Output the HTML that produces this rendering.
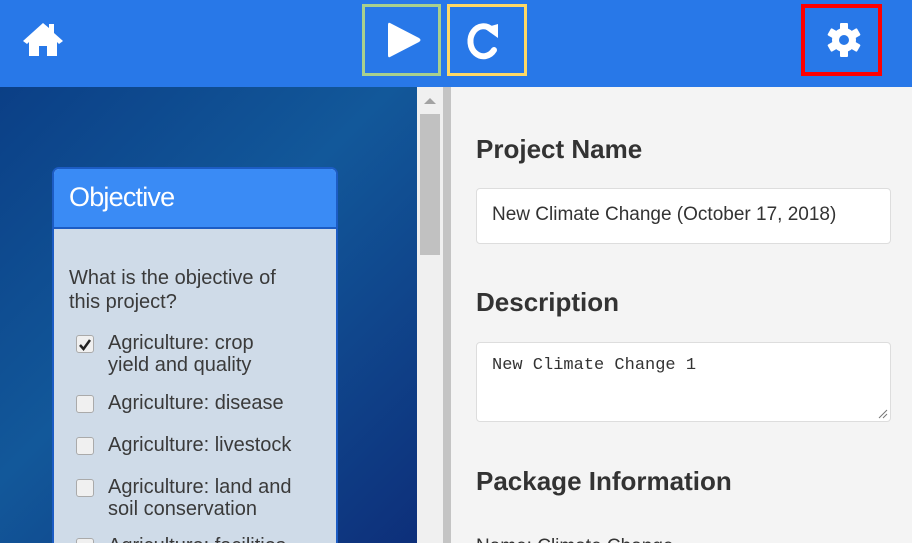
<!DOCTYPE html>
<html><head><meta charset="utf-8"><style>
*{box-sizing:border-box;margin:0;padding:0}
html,body{width:912px;height:543px;overflow:hidden}
body{font-family:"Liberation Sans",Arial,sans-serif;background:#f4f4f4;position:relative}
.hdr{position:absolute;left:0;top:0;width:912px;height:87px;background:#2878e8}
.box{position:absolute;top:4px;height:72px}
.left{position:absolute;left:0;top:87px;width:417px;height:456px;background:linear-gradient(135deg,#0b3f86 0%,#12589a 45%,#0d2f7a 100%)}
.sb{position:absolute;left:417px;top:87px;width:26px;height:456px;background:#f0f0f0}
.thumb{position:absolute;left:3px;top:27px;width:20px;height:141px;background:#c1c1c1}
.arrow{position:absolute;left:7px;top:11px;width:0;height:0;border-left:6px solid transparent;border-right:6px solid transparent;border-bottom:6px solid #a3a3a3}
.div{position:absolute;left:443px;top:87px;width:8px;height:456px;background:#c4c4c4}
.card{position:absolute;left:52px;top:167px;width:286px;height:390px;background:#cfdbe8;border:2px solid #1c5cc4;border-radius:7px;overflow:hidden}
.ch{height:60px;background:#3a8bf5;border-bottom:2px solid #1c5cc4;color:#fff;font-size:27px;padding:13px 0 0 15px;letter-spacing:-0.8px}
.q{position:absolute;left:15px;top:97px;font-size:20px;color:#3a3a3a;line-height:24px;width:235px}
.it{position:absolute;left:22px;font-size:20px;color:#3a3a3a;line-height:22px}
.it span{position:absolute;left:32px;top:0;width:200px}
.it span.n{width:180px}
.cb{position:absolute;left:0;top:3px;width:18px;height:18px;background:#f0f0f0;border:1px solid #aaa;border-radius:3px}
h2{position:absolute;left:476px;font-size:26px;font-weight:bold;color:#333}
.inp{position:absolute;left:476px;width:415px;background:#fff;border:1px solid #ddd;border-radius:4px}
</style></head><body>
<div class="hdr">
<svg style="position:absolute;left:20px;top:20px" width="46" height="38" viewBox="0 0 46 38"><path d="M23 3 L3 21 L7 24 L9 22 L9 36 L19 36 L19 26 L27 26 L27 36 L37 36 L37 22 L39 24 L43 21 L34 13 L34 4 L29 4 L29 8 Z" fill="#fff"/></svg>
<div class="box" style="left:362px;width:79px;border:3px solid #a8d08d"></div>
<svg style="position:absolute;left:387px;top:21px" width="36" height="38" viewBox="0 0 36 38"><path d="M3 2 Q1 1 1 4 L1 34 Q1 37 3 36 L32 21 Q35 19 32 17 Z" fill="#fff"/></svg>
<div class="box" style="left:447px;width:80px;border:3px solid #ffd966"></div>
<svg style="position:absolute;left:462px;top:20px" width="42" height="42" viewBox="0 0 42 42"><path d="M30 10 A13 15 0 1 0 32 30" fill="none" stroke="#fff" stroke-width="6" stroke-linecap="round"/><path d="M22 8 L36 4 L36 18 Z" fill="#fff"/></svg>
<div class="box" style="left:801px;width:81px;border:4px solid #ff0000"></div>
<svg style="position:absolute;left:824px;top:20px" width="40" height="40" viewBox="0 0 40 40"><g fill="#fff" transform="translate(20 20)"><circle r="12"/><g id="t"><rect x="-4" y="-17" width="8" height="8" rx="1"/></g><use href="#t" transform="rotate(60)"/><use href="#t" transform="rotate(120)"/><use href="#t" transform="rotate(180)"/><use href="#t" transform="rotate(240)"/><use href="#t" transform="rotate(300)"/></g><circle cx="20" cy="20" r="5" fill="#2878e8"/></svg>
</div>
<div class="left"></div>
<div class="card">
<div class="ch">Objective</div>
<div class="q">What is the objective of this project?</div>
<div class="it" style="top:163px"><div class="cb"><svg width="16" height="16" viewBox="0 0 16 16"><path d="M3 8 L6.5 12 L13 3" fill="none" stroke="#222" stroke-width="2.5"/></svg></div><span class="n">Agriculture: crop yield and quality</span></div>
<div class="it" style="top:223px"><div class="cb"></div><span>Agriculture: disease</span></div>
<div class="it" style="top:265px"><div class="cb"></div><span>Agriculture: livestock</span></div>
<div class="it" style="top:307px"><div class="cb"></div><span>Agriculture: land and soil conservation</span></div>
<div class="it" style="top:366px"><div class="cb"></div><span>Agriculture: facilities</span></div>
</div>
<div class="sb"><div class="arrow"></div><div class="thumb"></div></div>
<div class="div"></div>
<h2 style="top:134px">Project Name</h2>
<div class="inp" style="top:188px;height:56px;font-size:19px;color:#333;padding:15px 0 0 15px">New Climate Change (October 17, 2018)</div>
<h2 style="top:287px">Description</h2>
<div class="inp" style="top:342px;height:80px;font-family:'Liberation Mono',monospace;font-size:17px;color:#333;padding:13px 0 0 15px">New Climate Change 1
<svg style="position:absolute;right:2px;bottom:2px" width="10" height="10"><path d="M9 1 L1 9 M9 5 L5 9" stroke="#777" stroke-width="1"/></svg></div>
<h2 style="top:466px">Package Information</h2>
<div style="position:absolute;left:476px;top:536px;font-size:19px;color:#333">Name: Climate Change</div>
</body></html>
